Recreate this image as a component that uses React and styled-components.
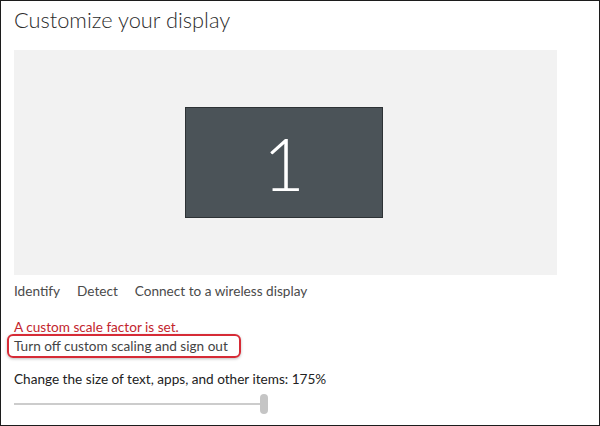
import styled, { createGlobalStyle } from "styled-components";

const GlobalStyle = createGlobalStyle`
  html, body {
    margin: 0;
    padding: 0;
    background: #ffffff;
  }
  body {
    font-family: Lato, "Liberation Sans", sans-serif;
  }
`;

export default function App() {
  return (
    <>
      <GlobalStyle />
      <Frame>
        <Title>Customize your display</Title>
        <Preview>
          <Monitor>1</Monitor>
        </Preview>
        <Links>
          <LinkText>Identify</LinkText>
          <LinkText>Detect</LinkText>
          <LinkText>Connect to a wireless display</LinkText>
        </Links>
        <Warning>A custom scale factor is set.</Warning>
        <Highlight>
          <Action>Turn off custom scaling and sign out</Action>
        </Highlight>
        <Label>Change the size of text, apps, and other items: 175%</Label>
        <Slider>
          <Track />
          <Thumb />
        </Slider>
      </Frame>
    </>
  );
}

const Frame = styled.div`
  width: 600px;
  height: 426px;
  box-sizing: border-box;
  border: 1px solid #1c1c1c;
  padding: 5px 0 0 13px;
  display: flex;
  flex-direction: column;
  align-items: flex-start;
  color: #333333;
  overflow: hidden;
`;

const Title = styled.div`
  font-size: 21.8px;
  font-weight: 300;
  line-height: 28px;
  color: #2b2b2b;
`;

const Preview = styled.div`
  margin-top: 16px;
  width: 543px;
  height: 225px;
  background: #f2f2f2;
  display: flex;
  align-items: center;
  justify-content: center;
`;

const Monitor = styled.div`
  width: 198px;
  height: 111px;
  box-sizing: border-box;
  background: #4b5358;
  border: 1px solid #2d3235;
  color: #ffffff;
  font-size: 72px;
  font-weight: 300;
  line-height: 1;
  display: flex;
  align-items: center;
  justify-content: center;
  margin-left: -3px;
`;

const Links = styled.div`
  margin-top: 7px;
  display: flex;
  gap: 17px;
  font-size: 13.6px;
  line-height: 18px;
  color: #4a4a4a;
`;

const LinkText = styled.span``;

const Warning = styled.div`
  margin-top: 18px;
  font-size: 13.6px;
  line-height: 18px;
  color: #c3252d;
`;

const Highlight = styled.div`
  margin-left: -7px;
  margin-top: -2px;
  padding: 1px 11px 1px 5px;
  border: 2px solid #d62b36;
  border-radius: 6px;
  box-shadow: 0 1px 3px rgba(0, 0, 0, 0.25);
`;

const Action = styled.div`
  font-size: 13.6px;
  line-height: 18px;
  color: #444444;
`;

const Label = styled.div`
  margin-top: 12px;
  font-size: 13.6px;
  line-height: 18px;
  color: #222222;
`;

const Slider = styled.div`
  margin-top: 6px;
  width: 256px;
  height: 20px;
  display: flex;
  align-items: center;
`;

const Track = styled.div`
  width: 246px;
  height: 2px;
  background: #cccccc;
`;

const Thumb = styled.div`
  width: 8px;
  height: 20px;
  border-radius: 4px;
  background: #c5c5c5;
`;
